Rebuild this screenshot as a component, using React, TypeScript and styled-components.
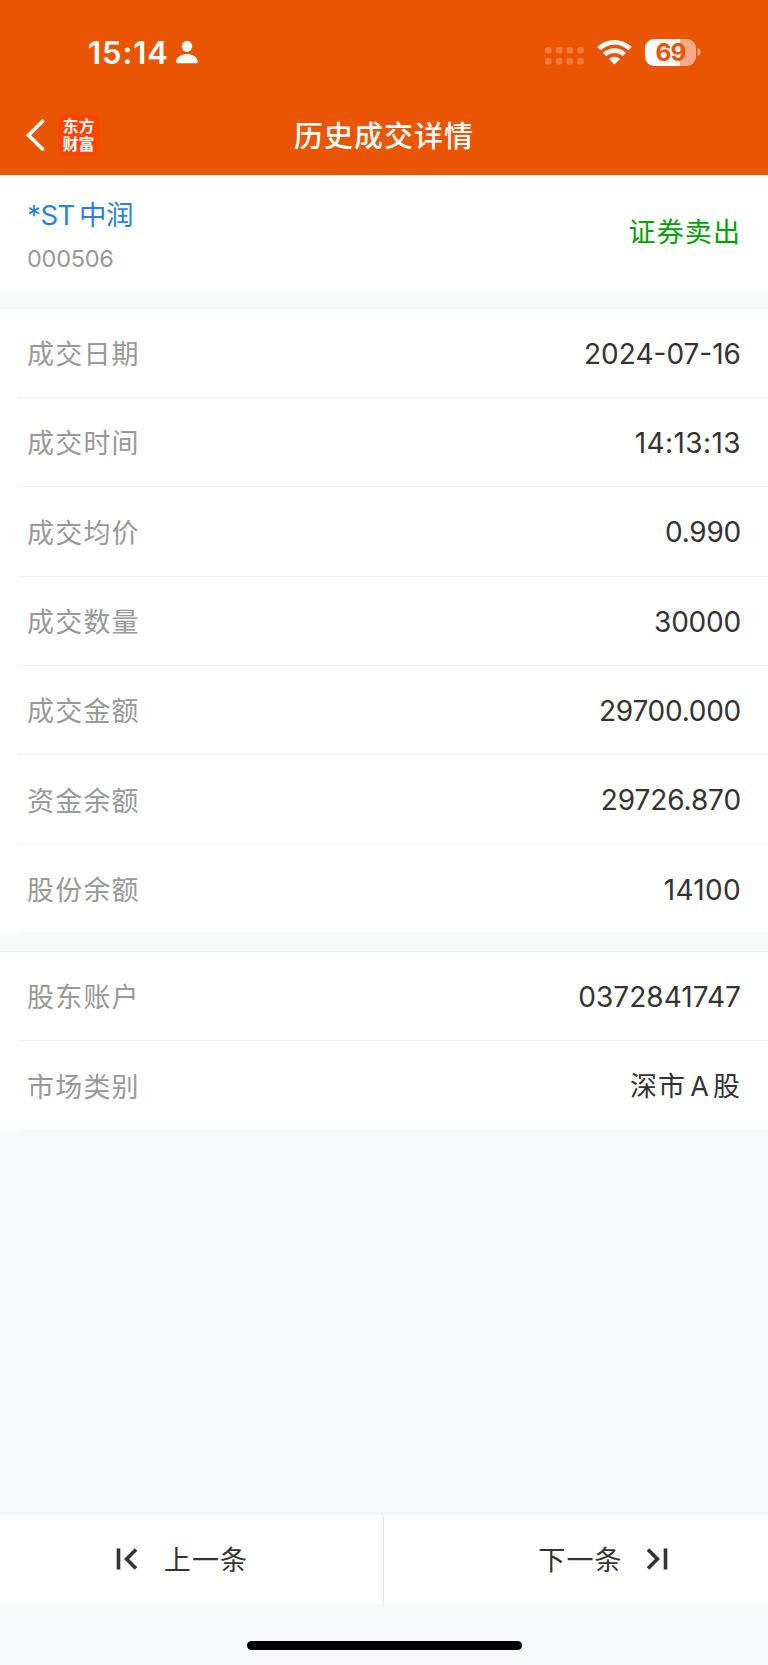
import React from "react";
import styled, { createGlobalStyle } from "styled-components";

const GlobalStyle = createGlobalStyle`
  * { box-sizing: border-box; }
  body {
    margin: 0;
    background: #f7f8fa;
    font-family: Inter, "Noto Sans CJK SC", sans-serif;
    color: #333;
  }
`;

const Screen = styled.div`
  width: 768px;
  height: 1665px;
  display: flex;
  flex-direction: column;
  background: #f7f8fa;
`;

const Header = styled.header`
  height: 174.6px;
  background: #ea5504;
  color: #fff;
`;

const StatusBar = styled.div`
  display: flex;
  justify-content: space-between;
  align-items: center;
  height: 104px;
  padding: 0 67px 0 88px;
`;

const StatusGroup = styled.div`
  display: flex;
  align-items: center;
`;

const Clock = styled.span`
  font-size: 31px;
  line-height: 38px;
  font-weight: 600;
  width: 87.5px;
  padding-top: 1px;
  letter-spacing: 0.9px;
  white-space: nowrap;
`;

const Signal = styled.svg`
  margin: 7px 13px 0 0;
`;

const Battery = styled.div`
  width: 51px;
  height: 27px;
  margin-left: 13px;
  border-radius: 9px;
  background: linear-gradient(to right, #fff 35px, #f5ab83 35px);
  color: #ea5504;
  font-size: 24.5px;
  font-weight: 700;
  line-height: 27px;
  letter-spacing: -0.8px;
  text-align: center;
`;

const NavBar = styled.div`
  display: grid;
  grid-template-columns: 1fr auto 1fr;
  align-items: center;
  height: 62px;
  padding-left: 25.5px;
  padding-right: 25.5px;
`;

const NavLeft = styled.div`
  display: flex;
  align-items: center;
  gap: 12px;
`;

const Brand = styled.div`
  width: 42px;
  height: 42px;
  padding-top: 3px;
  border-radius: 9px;
  background: #ff4400;
  font-family: "Noto Sans CJK SC", sans-serif;
  font-size: 16px;
  line-height: 17.5px;
  font-weight: 700;
  text-align: center;
`;

const Title = styled.h1`
  margin: 4px 0 0;
  font-size: 29px;
  line-height: 40px;
  font-weight: 500;
  letter-spacing: 1px;
`;

const Summary = styled.section`
  display: flex;
  justify-content: space-between;
  align-items: center;
  height: 116px;
  padding: 0 27px;
  background: #fff;
`;

const Stock = styled.div`
  padding-top: 4px;
`;

const StockName = styled.div`
  display: flex;
  gap: 4px;
  color: #2b7fe8;
  font-size: 27.5px;
  line-height: 40px;
  letter-spacing: -0.4px;
`;

const StockCode = styled.div`
  margin-top: 8px;
  color: #999;
  font-size: 23.5px;
  line-height: 32px;
  letter-spacing: -0.25px;
`;

const Side = styled.div`
  padding-top: 1px;
  color: #00a100;
  font-size: 27px;
  line-height: 40px;
  letter-spacing: 1.1px;
`;

const Group = styled.section`
  margin-top: 17px;
  border-top: 1px solid #eeeff1;
  background: #fff;
`;

const Row = styled.div`
  display: flex;
  justify-content: space-between;
  align-items: center;
  height: 89.33px;
  margin-left: 18px;
  padding: 0 27px 0 9px;
  border-bottom: 1px solid #f3f4f6;
`;

const Label = styled.span`
  padding-bottom: 0.5px;
  color: #999;
  font-size: 27px;
  letter-spacing: 1.2px;
`;

const Value = styled.span<{ $cjk?: boolean; $track?: number }>`
  padding-top: ${(p) => (p.$cjk ? "0" : "2px")};
  padding-bottom: ${(p) => (p.$cjk ? "1px" : "0")};
  font-size: ${(p) => (p.$cjk ? "27px" : "28px")};
  letter-spacing: ${(p) => (p.$cjk ? 1.1 : (p.$track ?? 0))}px;
`;

const Latin = styled.span`
  margin: 0 3px 0 4px;
`;

const Pager = styled.nav`
  display: flex;
  height: 91px;
  margin-top: auto;
  border-top: 1px solid #eeeff1;
  background: #fff;
`;

const PagerButton = styled.button<{ $first?: boolean }>`
  display: flex;
  align-items: center;
  justify-content: center;
  gap: ${(p) => (p.$first ? "26px" : "23px")};
  width: 384px;
  padding: ${(p) => (p.$first ? "0 19px 0 0" : "0 0 0 54px")};
  border: 0;
  border-right: ${(p) => (p.$first ? "1px solid #e8e9ec" : "0")};
  background: none;
  color: #333;
  font: inherit;
  font-size: 27px;
  letter-spacing: 1.2px;
`;

const PagerText = styled.span`
  padding-bottom: 2px;
`;

const HomeArea = styled.footer`
  display: flex;
  justify-content: center;
  height: 61px;
  padding-top: 37px;
`;

const HomeBar = styled.div`
  width: 275px;
  height: 9px;
  border-radius: 5px;
  background: #000;
`;

const trade: { label: string; value: string; track: number }[] = [
  { label: "成交日期", value: "2024-07-16", track: 0 },
  { label: "成交时间", value: "14:13:13", track: 0.4 },
  { label: "成交均价", value: "0.990", track: -0.25 },
  { label: "成交数量", value: "30000", track: -0.2 },
  { label: "成交金额", value: "29700.000", track: -0.25 },
  { label: "资金余额", value: "29726.870", track: -0.1 },
  { label: "股份余额", value: "14100", track: 0.3 },
];

const PersonIcon = () => (
  <svg width="22" height="24" viewBox="0 0 22 24" fill="#fff">
    <ellipse cx="11" cy="6.3" rx="5.2" ry="5.5" />
    <path d="M2 23.2C.8 23.2.2 22.5.2 21.4.2 18.5 4.3 14 11 14s10.800 4.500 10.800 7.400c0 1.100-.6 1.800-1.800 1.800Z" />
  </svg>
);

const SignalIcon = () => (
  <Signal width="39" height="18" viewBox="0 0 39 18" fill="#fff" fillOpacity=".22">
    {[0, 10.8, 21.5, 32.2].map((x) =>
      [0, 11].map((y) => <rect key={`${x}-${y}`} x={x} y={y} width="6.600" height="6.600" rx="2" />),
    )}
  </Signal>
);

const WifiIcon = () => (
  <svg width="35" height="26" viewBox="0 0 35 26" fill="none" stroke="#fff" strokeWidth="4.600">
    <path d="M1.900 9.700a22.300 22.300 0 0 1 31.200 0" />
    <path d="M7.700 15.600a14.100 14.100 0 0 1 19.600 0" />
    <path d="M17.500 25.500 12 20a8 8 0 0 1 11 0Z" fill="#fff" stroke="none" />
  </svg>
);

const PrevIcon = () => (
  <svg width="22" height="22" viewBox="0 0 22 22" fill="none" stroke="#333" strokeWidth="3.600">
    <path d="M2.500 0.500V21.500M20 1.600 10.600 11 20 20.400" />
  </svg>
);

const NextIcon = () => (
  <svg width="22" height="22" viewBox="0 0 22 22" fill="none" stroke="#333" strokeWidth="3.600">
    <path d="M19.500 0.500V21.500M2 1.600 11.400 11 2 20.400" />
  </svg>
);

export default function App() {
  return (
    <Screen>
      <GlobalStyle />
      <Header>
        <StatusBar>
          <StatusGroup>
            <Clock>15:14</Clock>
            <PersonIcon />
          </StatusGroup>
          <StatusGroup>
            <SignalIcon />
            <WifiIcon />
            <Battery>69</Battery>
            <svg width="5" height="10" viewBox="0 0 5 10">
              <path d="M1.500 1C5.800 2.200 5.800 7.800 1.500 9Z" fill="#f5ab83" />
            </svg>
          </StatusGroup>
        </StatusBar>
        <NavBar>
          <NavLeft>
            <svg width="20" height="32" viewBox="0 0 20 32" fill="none" stroke="#fff" strokeWidth="3.600" strokeLinecap="round">
              <path d="M16.500 2.200 2.500 16.200 16.500 30" />
            </svg>
            <Brand>
              东方
              <br />
              财富
            </Brand>
          </NavLeft>
          <Title>历史成交详情</Title>
        </NavBar>
      </Header>

      <Summary>
        <Stock>
          <StockName>
            <span>*ST</span>
            <span>中润</span>
          </StockName>
          <StockCode>000506</StockCode>
        </Stock>
        <Side>证券卖出</Side>
      </Summary>

      <Group>
        {trade.map(({ label, value, track }) => (
          <Row key={label}>
            <Label>{label}</Label>
            <Value $track={track}>{value}</Value>
          </Row>
        ))}
      </Group>

      <Group>
        <Row>
          <Label>股东账户</Label>
          <Value $track={0.05}>0372841747</Value>
        </Row>
        <Row>
          <Label>市场类别</Label>
          <Value $cjk>
            深市<Latin>A</Latin>股
          </Value>
        </Row>
      </Group>

      <Pager>
        <PagerButton $first>
          <PrevIcon />
          <PagerText>上一条</PagerText>
        </PagerButton>
        <PagerButton>
          <PagerText>下一条</PagerText>
          <NextIcon />
        </PagerButton>
      </Pager>
      <HomeArea>
        <HomeBar />
      </HomeArea>
    </Screen>
  );
}
